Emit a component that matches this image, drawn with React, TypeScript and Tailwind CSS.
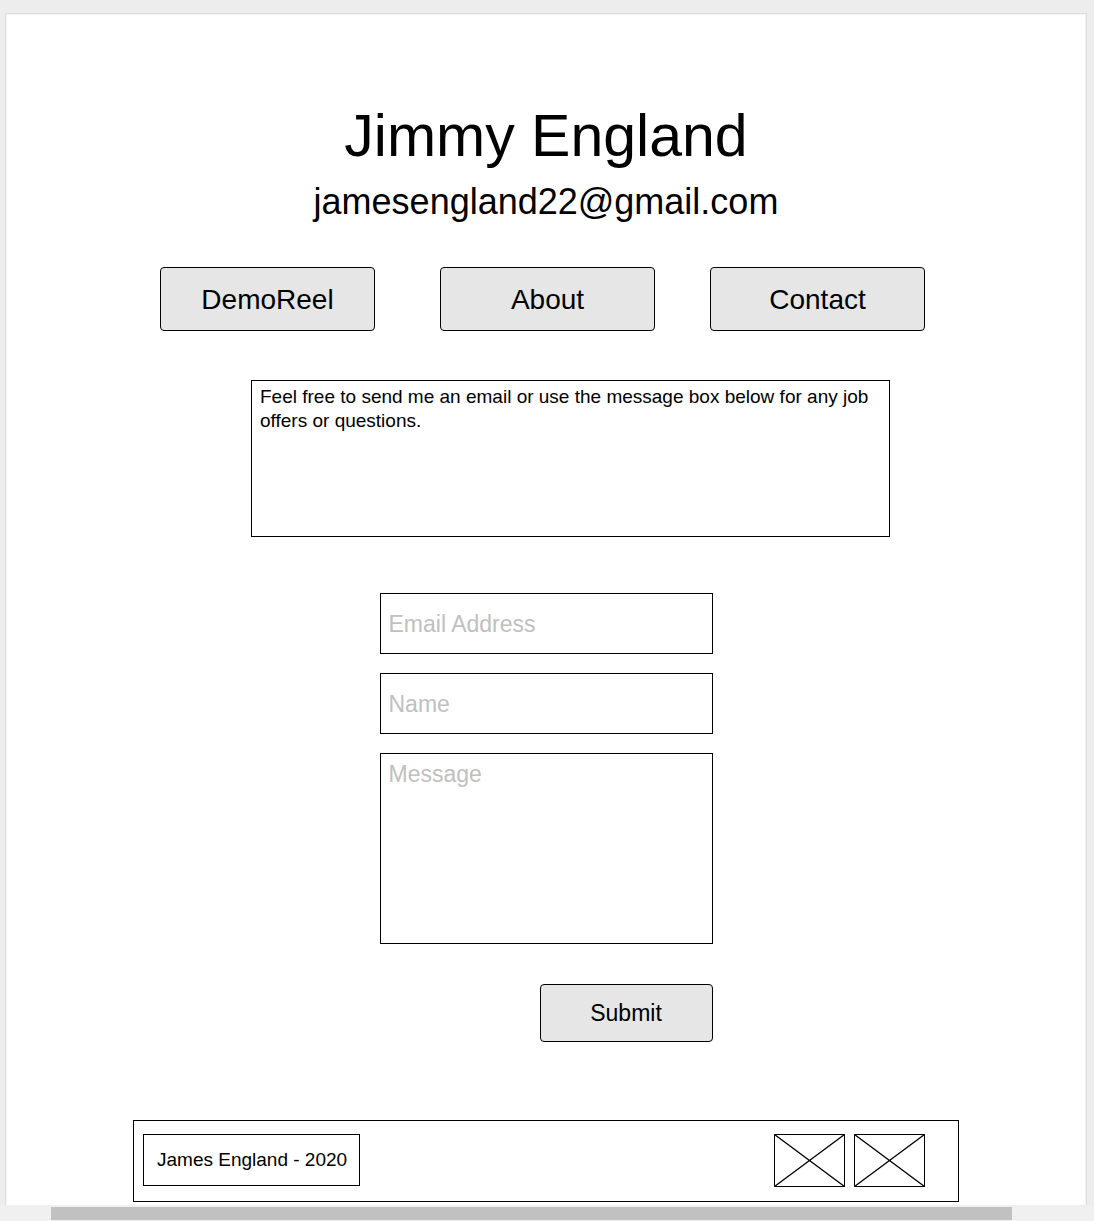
function Placeholder({ label }: { label: string }) {
  return (
    <svg role="img" aria-label={label} viewBox="0 0 71 53" className="h-[53px] w-[71px] shrink-0" fill="none" stroke="black">
      <rect x="0.5" y="0.5" width="70" height="52" />
      <path d="M0.5 0.5 70.5 52.5M70.5 0.5 0.5 52.5" strokeWidth="1.3" />
    </svg>
  );
}

const navButton =
  "h-16 min-w-0 flex-1 rounded border border-black bg-[#e6e6e6] pt-[2px] text-[28px] leading-8";
const field =
  "block w-full border border-black bg-white px-2 text-[23px] leading-7 outline-none placeholder:text-[#c0c0c0] placeholder:opacity-100";

export default function App() {
  return (
    <div className="bg-[#ededed] pt-[13px] font-['Liberation_Sans',Arial,sans-serif] text-black">
      <div className="mr-[7px] ml-[5px] border border-b-0 border-[#dfdfdf] bg-white px-4 pt-[88px] pb-[3px] shadow-[inset_1px_1px_0_#f3f3f3,inset_-1px_0_0_#f3f3f3]">
        <div className="mx-auto max-w-[826px]">
          <header className="text-center">
            <h1 className="text-[59px] leading-[68px]">Jimmy England</h1>
            <p className="mt-3 text-4xl leading-10">jamesengland22@gmail.com</p>
          </header>

          <nav className="mt-[45px] flex pr-[34px] pl-[27px]">
            <button type="button" className={navButton}>DemoReel</button>
            <button type="button" className={`${navButton} mr-[55px] ml-[65px]`}>About</button>
            <button type="button" className={navButton}>Contact</button>
          </nav>

          <main>
            <div className="mt-[49px] mr-[69px] ml-[118px] min-h-[157px] border border-black py-1 pr-[7px] pl-2">
              <p className="text-[19px] leading-6">
                Feel free to send me an email or use the message box below for any job offers or questions.
              </p>
            </div>

            <form className="mx-auto mt-14 max-w-[333px]" onSubmit={(e) => e.preventDefault()}>
              <div className="flex flex-col gap-[19px]">
                <input type="email" aria-label="Email Address" placeholder="Email Address" className={`${field} h-[61px] pt-[2px]`} />
                <input type="text" aria-label="Name" placeholder="Name" className={`${field} h-[61px] pt-[2px]`} />
                <textarea aria-label="Message" placeholder="Message" className={`${field} h-[191px] resize-none py-[6px]`} />
              </div>
              <div className="mt-10 flex justify-end">
                <button type="submit" className="h-[58px] w-[173px] rounded border border-black bg-[#e6e6e6] text-[23px] leading-7">
                  Submit
                </button>
              </div>
            </form>
          </main>

          <footer className="mt-[78px] flex min-h-[82px] items-start justify-between border border-black pt-[13px] pr-[33px] pl-[9px]">
            <p className="border border-black py-[13px] pr-3 pl-[13px] text-[19px] leading-6">James England - 2020</p>
            <div className="flex gap-[9px]">
              <Placeholder label="Image placeholder one" />
              <Placeholder label="Image placeholder two" />
            </div>
          </footer>
        </div>
      </div>
      <div className="h-4 bg-[#f0f0f0] pt-[2px] pr-[82px] pl-[51px]">
        <div className="h-[13px] bg-[#c1c1c1]" />
      </div>
    </div>
  );
}
